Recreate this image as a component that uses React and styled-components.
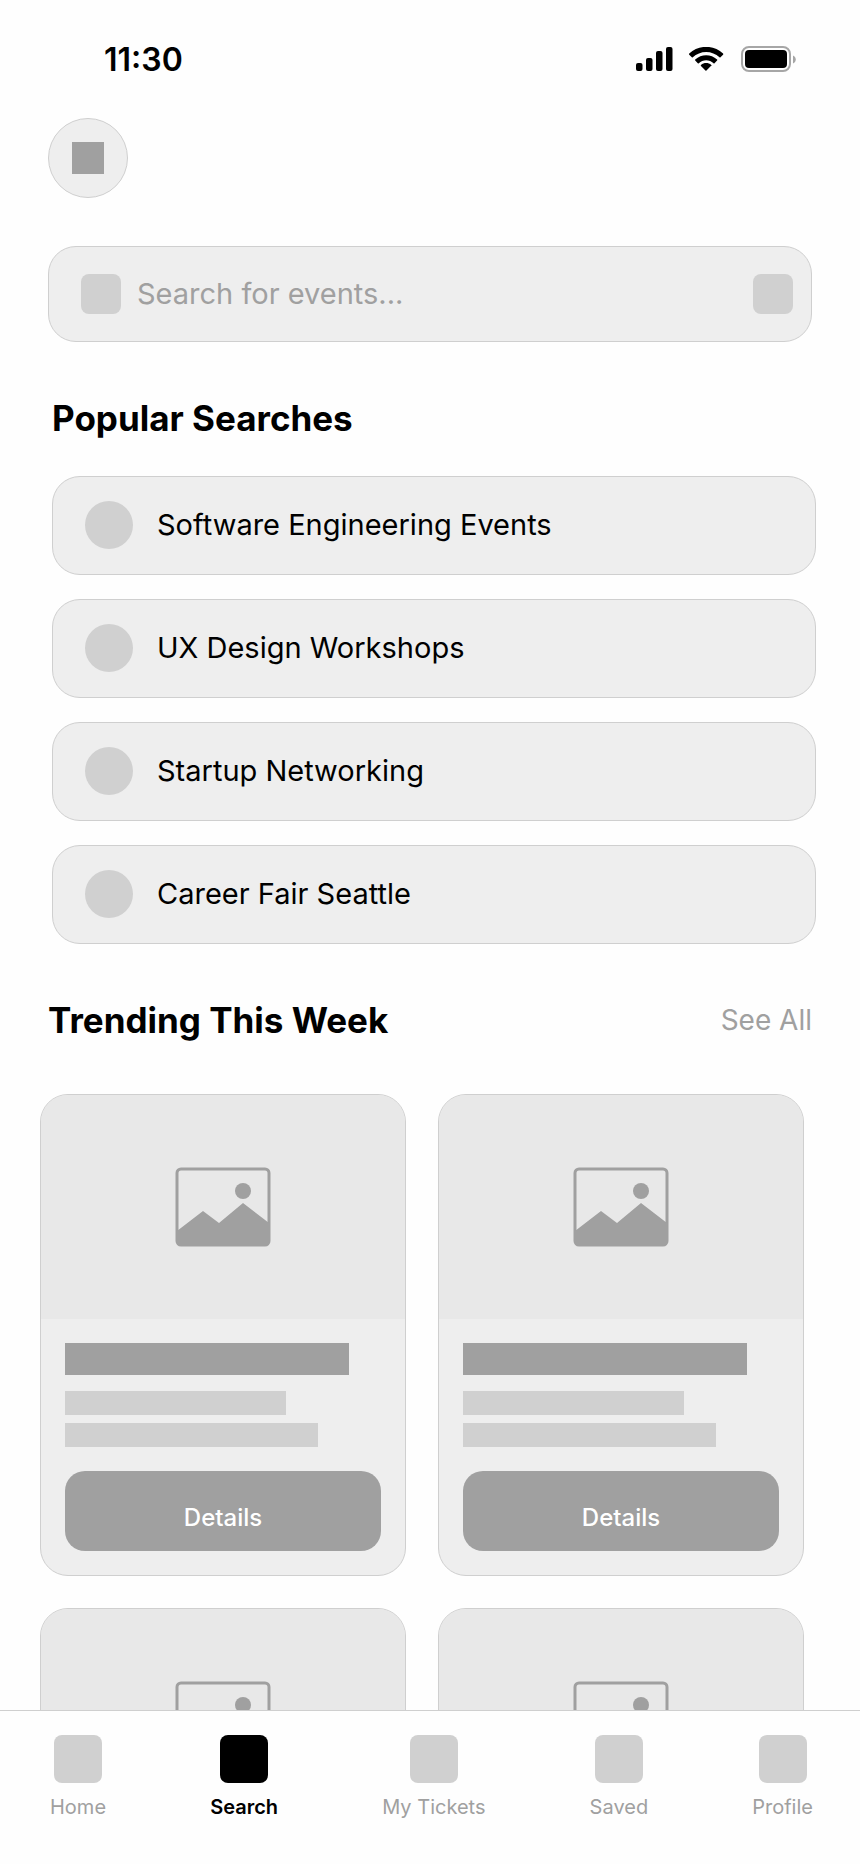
import React from 'react';
import styled, {createGlobalStyle} from 'styled-components';

const GlobalStyle = createGlobalStyle`
  * {
    box-sizing: border-box;
  }
  body {
    margin: 0;
    background-color: #fefefe;
    font-family: Inter, 'Liberation Sans', sans-serif;
    color: black;
  }
  button,
  input {
    font-family: inherit;
  }
`;

const Screen = styled.div`
  display: flex;
  flex-direction: column;
  height: 100vh;
`;
const Content = styled.main`
  flex: 1;
  min-height: 0;
  overflow-y: auto;
  scrollbar-width: none;
`;

const StatusBar = styled.header`
  display: flex;
  justify-content: space-between;
  align-items: center;
  height: 118px;
  padding: 0 64px 0 104px;
`;
const Time = styled.time`
  font-size: 32px;
  font-weight: 600;
`;
const StatusIcons = styled.div`
  display: flex;
  align-items: center;
  gap: 16px;
`;

const TopBar = styled.div`
  padding: 0 48px;
`;
const Avatar = styled.button`
  display: flex;
  justify-content: center;
  align-items: center;
  width: 80px;
  height: 80px;
  padding: 0;
  border: 1px solid #cfcfcf;
  border-radius: 50%;
  background-color: #eeeeee;
`;
const AvatarMark = styled.span`
  width: 32px;
  height: 32px;
  background-color: #a0a0a0;
`;

const SearchBox = styled.form`
  display: flex;
  align-items: center;
  gap: 16px;
  height: 96px;
  margin: 48px 48px 0;
  padding: 0 18px 0 32px;
  border: 1px solid #cfcfcf;
  border-radius: 28px;
  background-color: #eeeeee;
`;
const SearchIcon = styled.span`
  flex: none;
  width: 40px;
  height: 40px;
  border-radius: 8px;
  background-color: #d0d0d0;
`;
const FilterButton = styled.button`
  flex: none;
  width: 40px;
  height: 40px;
  padding: 0;
  border: none;
  border-radius: 8px;
  background-color: #d0d0d0;
`;
const SearchInput = styled.input`
  flex: 1;
  min-width: 0;
  height: 48px;
  padding: 0 0 2px;
  border: none;
  outline: none;
  background: none;
  font-size: 29px;
  &::placeholder {
    color: #a0a0a0;
    opacity: 1;
  }
`;

const Section = styled.section`
  padding-top: 56px;
`;
const SectionHeader = styled.div`
  display: flex;
  justify-content: space-between;
  align-items: center;
  padding: ${({$wide}) => ($wide ? '0 48px' : '0 44px 0 52px')};
`;
const Title = styled.h2`
  margin: 0;
  font-size: 35px;
  font-weight: 700;
  line-height: 40px;
`;
const SeeAll = styled.a`
  font-size: 28px;
  line-height: 40px;
  color: #a0a0a0;
  text-decoration: none;
`;

const SearchList = styled.ul`
  display: flex;
  flex-direction: column;
  gap: 24px;
  margin: 38px 0 0;
  padding: 0 44px 0 52px;
  list-style: none;
`;
const SearchRow = styled.button`
  display: flex;
  align-items: center;
  gap: 24px;
  width: 100%;
  height: 99px;
  padding: 0 32px 2px;
  border: 1px solid #cfcfcf;
  border-radius: 28px;
  background-color: #eeeeee;
  font-size: 29px;
  text-align: left;
  color: black;
`;
const Dot = styled.span`
  flex: none;
  width: 48px;
  height: 48px;
  border-radius: 50%;
  background-color: #d0d0d0;
`;

const CardGrid = styled.div`
  display: grid;
  grid-template-columns: 1fr 1fr;
  gap: 32px;
  margin-top: 54px;
  padding: 0 56px 32px 40px;
`;
const CardBox = styled.article`
  overflow: hidden;
  border: 1px solid #cfcfcf;
  border-radius: 28px;
  background-color: #eeeeee;
`;
const CardImage = styled.div`
  display: flex;
  justify-content: center;
  align-items: center;
  height: 224px;
  background-color: #e8e8e8;
`;
const CardBody = styled.div`
  display: flex;
  flex-direction: column;
  padding: 24px;
`;
const TitleBar = styled.div`
  width: 90%;
  height: 32px;
  margin-bottom: 16px;
  background-color: #a0a0a0;
`;
const TextBar = styled.div`
  width: ${({$width}) => $width};
  height: 24px;
  margin-bottom: 8px;
  background-color: #d0d0d0;
`;
const DetailsButton = styled.button`
  height: 80px;
  margin-top: 16px;
  padding: 12px 0 0;
  border: none;
  border-radius: 20px;
  background-color: #a0a0a0;
  font-size: 24px;
  font-weight: 500;
  color: white;
`;

const TabBar = styled.nav`
  display: flex;
  justify-content: space-between;
  height: 154px;
  padding: 24px 47px 0 50px;
  border-top: 1px solid #cfcfcf;
  background-color: #fefefe;
`;
const Tab = styled.a`
  display: flex;
  flex-direction: column;
  align-items: center;
  gap: 12px;
  font-size: 20px;
  font-weight: ${({$active}) => ($active ? 600 : 400)};
  line-height: 24px;
  color: ${({$active}) => ($active ? 'black' : '#a0a0a0')};
  text-decoration: none;
`;
const TabIcon = styled.span`
  width: 48px;
  height: 48px;
  border-radius: 8px;
  background-color: ${({$active}) => ($active ? 'black' : '#d0d0d0')};
`;

const Signal = () => (
  <svg width="37" height="24" viewBox="0 0 37 24" aria-hidden="true">
    <rect x="0" y="16" width="6.5" height="8" rx="2" />
    <rect x="10" y="11" width="6.5" height="13" rx="2" />
    <rect x="20" y="4" width="6.5" height="20" rx="2" />
    <rect x="30" y="0" width="6.5" height="24" rx="2" />
  </svg>
);

const Wifi = () => (
  <svg width="36" height="24" viewBox="0 0 18 12" aria-hidden="true">
    <path d="M8.57 2.47c2.49 0 4.88.95 6.68 2.66.13.13.35.13.49 0l1.29-1.3c.07-.07.11-.16.11-.26 0-.1-.04-.19-.11-.26-4.73-4.53-12.18-4.53-16.91 0-.07.07-.11.16-.11.26 0 .1.04.19.11.26l1.29 1.3c.14.14.35.14.49 0 1.8-1.71 4.19-2.66 6.67-2.66z" />
    <path d="M8.57 6.68c1.36 0 2.68.51 3.69 1.42.14.13.36.13.49 0l1.29-1.3c.07-.07.11-.16.11-.26 0-.1-.04-.19-.11-.26-3.08-2.88-7.84-2.88-10.93 0-.07.07-.11.16-.11.26 0 .1.04.19.11.26l1.29 1.3c.13.13.35.13.49 0 1.01-.91 2.33-1.42 3.68-1.42z" />
    <path d="M11.15 9.48c.07-.07.11-.17.11-.27 0-.1-.05-.19-.12-.26-1.48-1.23-3.66-1.23-5.14 0-.07.06-.12.16-.12.26 0 .1.04.2.11.27l2.23 2.25c.07.07.15.1.25.1.09 0 .18-.04.25-.1l2.23-2.25z" />
  </svg>
);

const Battery = () => (
  <svg width="55" height="26" viewBox="0 0 55 26" aria-hidden="true">
    <rect
      x="1"
      y="1"
      width="48"
      height="24"
      rx="7"
      fill="none"
      stroke="#a6a6a6"
      strokeWidth="2"
    />
    <rect x="4" y="4" width="42" height="18" rx="4" />
    <path d="M52 9.5v8c1.6-.7 2.8-2.2 2.8-4s-1.2-3.3-2.8-4z" fill="#a6a6a6" />
  </svg>
);

const Picture = () => (
  <svg width="96" height="80" viewBox="0 0 96 80" aria-hidden="true">
    <rect
      x="2"
      y="2"
      width="92"
      height="76"
      rx="4"
      fill="none"
      stroke="#a0a0a0"
      strokeWidth="3"
    />
    <circle cx="68" cy="24" r="8" fill="#a0a0a0" />
    <path
      d="M2 64L28 44L44 56L68 36L94 56V74a4 4 0 0 1-4 4H6a4 4 0 0 1-4-4z"
      fill="#a0a0a0"
    />
  </svg>
);

const Card = () => (
  <CardBox>
    <CardImage>
      <Picture />
    </CardImage>
    <CardBody>
      <TitleBar />
      <TextBar $width="70%" />
      <TextBar $width="80%" />
      <DetailsButton type="button">Details</DetailsButton>
    </CardBody>
  </CardBox>
);

const searches = [
  'Software Engineering Events',
  'UX Design Workshops',
  'Startup Networking',
  'Career Fair Seattle',
];
const tabs = ['Home', 'Search', 'My Tickets', 'Saved', 'Profile'];

const App = () => {
  return (
    <Screen>
      <GlobalStyle />
      <Content>
        <StatusBar>
          <Time>11:30</Time>
          <StatusIcons>
            <Signal />
            <Wifi />
            <Battery />
          </StatusIcons>
        </StatusBar>

        <TopBar>
          <Avatar type="button" aria-label="Menu">
            <AvatarMark />
          </Avatar>
        </TopBar>

        <SearchBox role="search" onSubmit={e => e.preventDefault()}>
          <SearchIcon />
          <SearchInput
            type="text"
            aria-label="Search for events"
            placeholder="Search for events..."
          />
          <FilterButton type="button" aria-label="Filter" />
        </SearchBox>

        <Section>
          <SectionHeader>
            <Title>Popular Searches</Title>
          </SectionHeader>
          <SearchList>
            {searches.map(name => (
              <li key={name}>
                <SearchRow type="button">
                  <Dot />
                  {name}
                </SearchRow>
              </li>
            ))}
          </SearchList>
        </Section>

        <Section>
          <SectionHeader $wide>
            <Title>Trending This Week</Title>
            <SeeAll href="#trending">See All</SeeAll>
          </SectionHeader>
          <CardGrid>
            <Card />
            <Card />
            <Card />
            <Card />
          </CardGrid>
        </Section>
      </Content>

      <TabBar>
        {tabs.map(name => (
          <Tab key={name} href="#tab" $active={name === 'Search'}>
            <TabIcon $active={name === 'Search'} />
            {name}
          </Tab>
        ))}
      </TabBar>
    </Screen>
  );
};

export default App;
